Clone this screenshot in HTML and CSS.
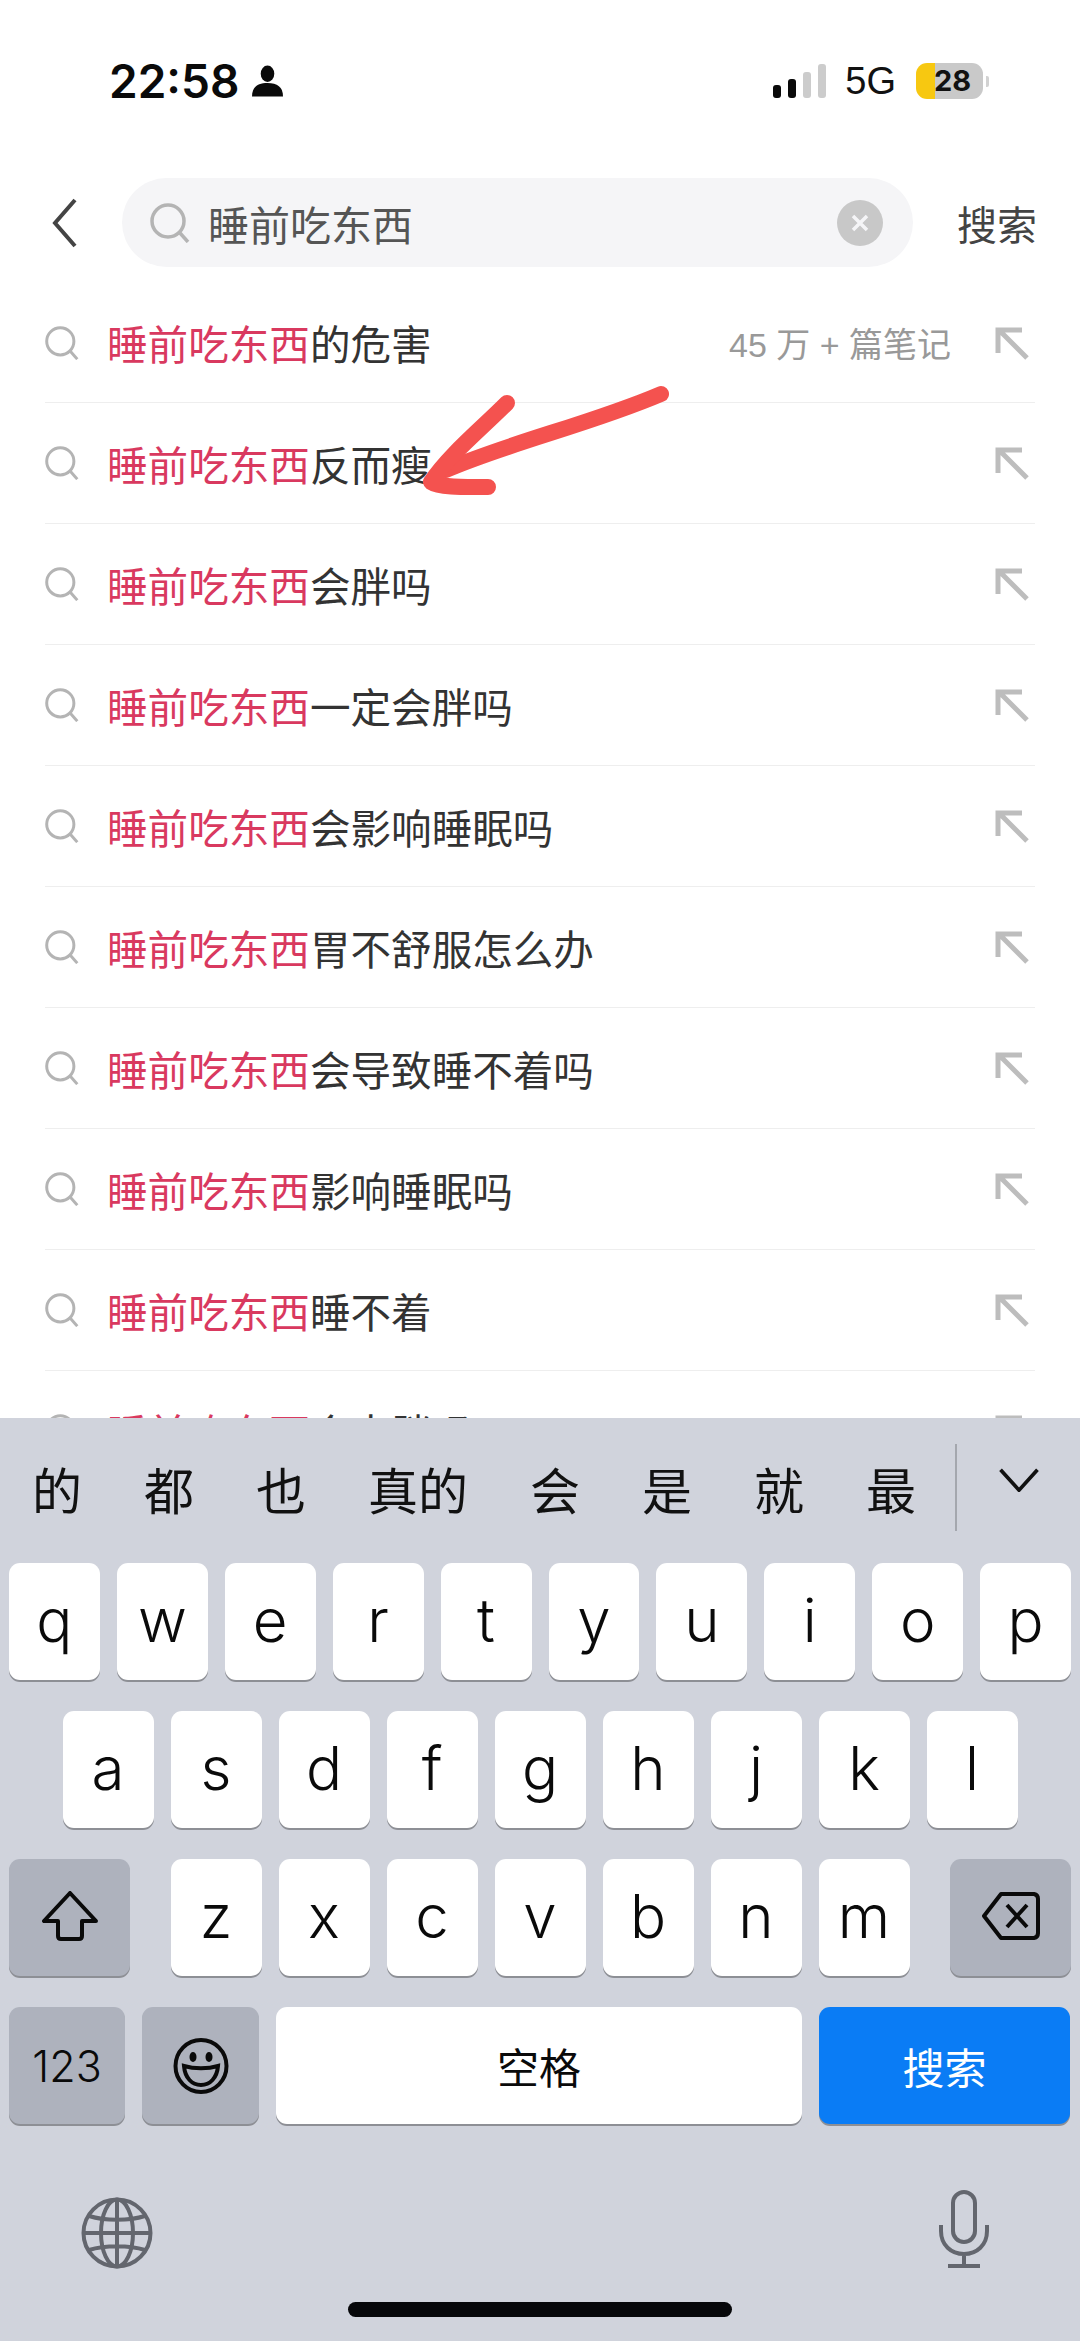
FILE: index.html
```html
<!DOCTYPE html>
<html lang="zh-CN">
<head>
    <meta charset="UTF-8">
    <meta name="viewport" content="width=device-width, initial-scale=1.0">
    <title>搜索</title>
    <link rel="stylesheet" href="styles.css">
</head>
<body>
    <div class="screen">
        <div class="status-bar">
            <div class="status-left">
                <span class="time">22:58</span>
                <svg class="person" viewBox="0 0 32 32"><ellipse cx="16" cy="8.5" rx="7" ry="8.5"/><path d="M0 32c0-10 6-14 16-14s16 4 16 14z"/></svg>
            </div>
            <div class="status-right">
                <div class="signal">
                    <span class="bar bar1"></span>
                    <span class="bar bar2"></span>
                    <span class="bar bar3"></span>
                    <span class="bar bar4"></span>
                </div>
                <span class="network">5G</span>
                <div class="battery"><span class="battery-level">28</span></div>
                <span class="battery-nub"></span>
            </div>
        </div>

        <div class="search-row">
            <svg class="back" viewBox="0 0 25 50"><path d="M23 2 3 25l20 23"/></svg>
            <div class="search-box">
                <svg class="search-icon big" viewBox="0 0 40 40"><circle cx="18" cy="18" r="16"/><path d="m30 30 8 9"/></svg>
                <span class="search-text">睡前吃东西</span>
                <svg class="clear" viewBox="0 0 46 46"><circle cx="23" cy="23" r="23"/><path d="m16 16 14 14m0-14L16 30"/></svg>
            </div>
            <span class="search-link">搜索</span>
        </div>

        <ul class="list">
            <li class="row">
                <svg class="search-icon" viewBox="0 0 40 40"><circle cx="18" cy="18" r="16"/><path d="m30 30 8 9"/></svg>
                <span class="row-text"><em>睡前吃东西</em>的危害</span>
                <span class="row-count">45 万 + 篇笔记</span>
                <svg class="fill-icon" viewBox="0 0 34 34"><path d="M3 27V4h24M4 4l28 28"/></svg>
            </li>
            <li class="row">
                <svg class="search-icon" viewBox="0 0 40 40"><circle cx="18" cy="18" r="16"/><path d="m30 30 8 9"/></svg>
                <span class="row-text"><em>睡前吃东西</em>反而瘦</span>
                <svg class="fill-icon" viewBox="0 0 34 34"><path d="M3 27V4h24M4 4l28 28"/></svg>
            </li>
            <li class="row">
                <svg class="search-icon" viewBox="0 0 40 40"><circle cx="18" cy="18" r="16"/><path d="m30 30 8 9"/></svg>
                <span class="row-text"><em>睡前吃东西</em>会胖吗</span>
                <svg class="fill-icon" viewBox="0 0 34 34"><path d="M3 27V4h24M4 4l28 28"/></svg>
            </li>
            <li class="row">
                <svg class="search-icon" viewBox="0 0 40 40"><circle cx="18" cy="18" r="16"/><path d="m30 30 8 9"/></svg>
                <span class="row-text"><em>睡前吃东西</em>一定会胖吗</span>
                <svg class="fill-icon" viewBox="0 0 34 34"><path d="M3 27V4h24M4 4l28 28"/></svg>
            </li>
            <li class="row">
                <svg class="search-icon" viewBox="0 0 40 40"><circle cx="18" cy="18" r="16"/><path d="m30 30 8 9"/></svg>
                <span class="row-text"><em>睡前吃东西</em>会影响睡眠吗</span>
                <svg class="fill-icon" viewBox="0 0 34 34"><path d="M3 27V4h24M4 4l28 28"/></svg>
            </li>
            <li class="row">
                <svg class="search-icon" viewBox="0 0 40 40"><circle cx="18" cy="18" r="16"/><path d="m30 30 8 9"/></svg>
                <span class="row-text"><em>睡前吃东西</em>胃不舒服怎么办</span>
                <svg class="fill-icon" viewBox="0 0 34 34"><path d="M3 27V4h24M4 4l28 28"/></svg>
            </li>
            <li class="row">
                <svg class="search-icon" viewBox="0 0 40 40"><circle cx="18" cy="18" r="16"/><path d="m30 30 8 9"/></svg>
                <span class="row-text"><em>睡前吃东西</em>会导致睡不着吗</span>
                <svg class="fill-icon" viewBox="0 0 34 34"><path d="M3 27V4h24M4 4l28 28"/></svg>
            </li>
            <li class="row">
                <svg class="search-icon" viewBox="0 0 40 40"><circle cx="18" cy="18" r="16"/><path d="m30 30 8 9"/></svg>
                <span class="row-text"><em>睡前吃东西</em>影响睡眠吗</span>
                <svg class="fill-icon" viewBox="0 0 34 34"><path d="M3 27V4h24M4 4l28 28"/></svg>
            </li>
            <li class="row">
                <svg class="search-icon" viewBox="0 0 40 40"><circle cx="18" cy="18" r="16"/><path d="m30 30 8 9"/></svg>
                <span class="row-text"><em>睡前吃东西</em>睡不着</span>
                <svg class="fill-icon" viewBox="0 0 34 34"><path d="M3 27V4h24M4 4l28 28"/></svg>
            </li>
            <li class="row">
                <svg class="search-icon" viewBox="0 0 40 40"><circle cx="18" cy="18" r="16"/><path d="m30 30 8 9"/></svg>
                <span class="row-text"><em>睡前吃东西</em>会太胖吗</span>
                <svg class="fill-icon" viewBox="0 0 34 34"><path d="M3 27V4h24M4 4l28 28"/></svg>
            </li>
        </ul>

        <div class="keyboard">
            <div class="candidates">
                <div class="candidate-words">
                    <span>的</span><span>都</span><span>也</span><span>真的</span><span>会</span><span>是</span><span>就</span><span>最</span>
                </div>
                <div class="candidate-more">
                    <svg class="chevron" viewBox="0 0 44 26"><path d="m2 2 20 22L42 2"/></svg>
                </div>
            </div>

            <div class="keys">
                <div class="key-row">
                    <span class="key">q</span><span class="key">w</span><span class="key">e</span><span class="key">r</span><span class="key">t</span><span class="key">y</span><span class="key">u</span><span class="key">i</span><span class="key">o</span><span class="key">p</span>
                </div>
                <div class="key-row">
                    <span class="key">a</span><span class="key">s</span><span class="key">d</span><span class="key">f</span><span class="key">g</span><span class="key">h</span><span class="key">j</span><span class="key">k</span><span class="key">l</span>
                </div>
                <div class="key-row between">
                    <span class="key side">
                        <svg class="shift" viewBox="0 0 58 50"><path d="M29 2 3 30h14v15q0 3 3 3h18q3 0 3-3V30h14z"/></svg>
                    </span>
                    <div class="key-group">
                        <span class="key">z</span><span class="key">x</span><span class="key">c</span><span class="key">v</span><span class="key">b</span><span class="key">n</span><span class="key">m</span>
                    </div>
                    <span class="key side">
                        <svg class="delete" viewBox="0 0 60 50"><path d="M20 3h33a5 5 0 0 1 4 5v34a5 5 0 0 1-4 5H20L3 25z"/><path d="m26 14 20 22m0-22L26 36"/></svg>
                    </span>
                </div>
                <div class="key-row bottom">
                    <span class="key mod num">123</span>
                    <span class="key mod emoji">
                        <svg class="smile" viewBox="0 0 56 56"><ellipse cx="28" cy="28" rx="25.5" ry="26"/><ellipse class="dot" cx="20" cy="19" rx="3.5" ry="5"/><ellipse class="dot" cx="36" cy="19" rx="3.5" ry="5"/><path class="mouth" d="M11 28c10 3 24 3 34 0-1 12-8 19-17 19s-16-7-17-19z"/></svg>
                    </span>
                    <span class="key space">空格</span>
                    <span class="key go">搜索</span>
                </div>
            </div>

            <div class="keyboard-tools">
                <svg class="globe" viewBox="0 0 72 72"><circle cx="36" cy="36" r="33.5"/><ellipse cx="36" cy="36" rx="16" ry="33.5"/><path d="M36 2v68M3 36h66M8 19c16 5 40 5 56 0M8 53c16-5 40-5 56 0"/></svg>
                <svg class="mic" viewBox="0 0 52 78"><rect x="15" y="2" width="22" height="50" rx="11"/><path d="M3 35v6c0 14 10 23 23 23s23-9 23-23v-6M26 64v11M10 76h32"/></svg>
            </div>
            <div class="home-bar"></div>
        </div>

        <svg class="scribble" viewBox="0 0 1080 2341">
            <path d="M661 394c-70 30-150 48-215 76"/>
            <path d="M507 403c-27 27-58 52-76 79 9 6 36 5 57 5"/>
        </svg>
    </div>
</body>
</html>
```

FILE: styles.css
```css
* {
    box-sizing: border-box;
}

body {
    margin: 0;
    background-color: #ffffff;
    font-family: "Liberation Sans", "Noto Sans CJK SC", sans-serif;
    color: #333333;
}

svg {
    display: block;
    flex-shrink: 0;
}

.screen {
    position: relative;
    width: 1080px;
    height: 2341px;
    overflow: hidden;
    display: flex;
    flex-direction: column;
}

/* status bar */
.status-bar {
    height: 178px;
    padding: 56px 91px 0 109px;
    display: flex;
    justify-content: space-between;
    align-items: flex-start;
}

.status-left {
    display: flex;
    align-items: center;
    gap: 13px;
}

.time {
    font-family: Inter, "Liberation Sans", sans-serif;
    font-size: 46px;
    line-height: 50px;
    font-weight: 600;
    color: #0a0a0a;
}

.person {
    width: 31px;
    height: 32px;
    fill: #0a0a0a;
}

.status-right {
    display: flex;
    align-items: center;
    height: 50px;
}

.signal {
    display: flex;
    align-items: flex-end;
    gap: 7px;
    margin-right: 19px;
}

.bar {
    width: 8px;
    border-radius: 3px;
    background-color: #cccccc;
}

.bar1 {
    height: 13px;
    background-color: #0a0a0a;
}

.bar2 {
    height: 19px;
    background-color: #0a0a0a;
}

.bar3 {
    height: 26px;
}

.bar4 {
    height: 34px;
}

.network {
    font-size: 38px;
    line-height: 50px;
    color: #111111;
    margin-right: 20px;
}

.battery {
    width: 67px;
    height: 36px;
    border-radius: 11px;
    background: linear-gradient(90deg, #f7c811 19px, #c9c9c9 19px);
    text-align: center;
    padding-left: 6px;
}

.battery-level {
    font-family: Inter, "Liberation Sans", sans-serif;
    font-size: 29px;
    line-height: 36px;
    font-weight: 700;
    color: #111111;
    display: block;
}

.battery-nub {
    width: 3px;
    height: 11px;
    margin-left: 3px;
    background-color: #d2d2d2;
    border-radius: 0 2px 2px 0;
}

/* search bar */
.search-row {
    height: 105px;
    padding: 0 43px 16px 52px;
    display: flex;
    align-items: center;
}

.back {
    width: 25px;
    height: 50px;
    fill: none;
    stroke: #444444;
    stroke-width: 4;
    margin-right: 45px;
}

.search-box {
    width: 791px;
    height: 89px;
    flex-shrink: 0;
    border-radius: 45px;
    background-color: #f5f5f7;
    padding: 0 30px 0 28px;
    display: flex;
    align-items: center;
}

.search-icon {
    width: 34px;
    height: 34px;
    fill: none;
    stroke: #b4b4b4;
    stroke-width: 3.5;
}

.search-icon.big {
    width: 40px;
    height: 40px;
    stroke-width: 3.5;
}

.search-text {
    font-size: 41px;
    color: #555555;
    margin-left: 18px;
    flex: 1;
}

.clear {
    width: 46px;
    height: 46px;
    fill: #c8c8c8;
    stroke: #f5f5f7;
    stroke-width: 3.5;
}

.clear circle {
    stroke: none;
}

.search-link {
    font-size: 40px;
    color: #444444;
    margin-left: 44px;
    white-space: nowrap;
}

/* suggestions */
.list {
    list-style: none;
    margin: 0;
    padding: 0 45px;
    height: 1135px;
    overflow: hidden;
}

.row {
    height: 121px;
    border-bottom: 1px solid #eeeeee;
    display: flex;
    align-items: center;
}

.row:first-child {
    height: 120px;
}

.row-text {
    font-size: 40.6px;
    color: #333333;
    margin-left: 28px;
    flex: 1;
}

.row-text em {
    font-style: normal;
    color: #d9395f;
}

.row-count {
    font-size: 34px;
    color: #999999;
    margin-right: 44px;
}

.fill-icon {
    width: 34px;
    height: 34px;
    margin-right: 6px;
    fill: none;
    stroke: #bdbdbd;
    stroke-width: 5;
}

/* keyboard */
.keyboard {
    flex: 1;
    background-color: #d0d3dc;
    display: flex;
    flex-direction: column;
    position: relative;
}

.candidates {
    height: 145px;
    display: flex;
    align-items: center;
}

.candidate-words {
    width: 955px;
    padding: 4px 0 0 32px;
    display: flex;
    gap: 62px;
    font-size: 50px;
    line-height: 58px;
    color: #111111;
}

.candidate-more {
    flex: 1;
    height: 87px;
    margin-bottom: 6px;
    border-left: 2px solid #a4a7ae;
    padding: 24px 0 0 41px;
}

.chevron {
    width: 42px;
    height: 24px;
    fill: none;
    stroke: #111111;
    stroke-width: 4;
}

.keys {
    padding: 0 9px;
    display: flex;
    flex-direction: column;
    gap: 31px;
}

.key-row {
    display: flex;
    justify-content: center;
    gap: 17px;
}

.key-row.between {
    justify-content: space-between;
    gap: 0;
}

.key-group {
    display: flex;
    gap: 17px;
}

.key {
    width: 91px;
    height: 117px;
    padding-bottom: 4px;
    border-radius: 11px;
    background-color: #ffffff;
    box-shadow: 0 2px 0 #8d8f95;
    display: flex;
    align-items: center;
    justify-content: center;
    font-family: Inter, "Liberation Sans", "Noto Sans CJK SC", sans-serif;
    font-size: 60px;
    font-weight: 300;
    color: #0a0a0a;
}

.key.side {
    width: 121px;
    background-color: #aeb2bd;
}

.shift {
    width: 58px;
    height: 50px;
    fill: none;
    stroke: #0a0a0a;
    stroke-width: 4;
    stroke-linejoin: round;
}

.delete {
    width: 60px;
    height: 50px;
    fill: none;
    stroke: #0a0a0a;
    stroke-width: 4;
    stroke-linejoin: round;
}

.key.mod {
    background-color: #aeb2bd;
    padding-bottom: 0;
}

.key.num {
    width: 116px;
    font-size: 43px;
}

.key.emoji {
    width: 117px;
}

.smile {
    width: 56px;
    height: 58px;
    fill: none;
    stroke: #0a0a0a;
    stroke-width: 4;
}

.smile .dot {
    fill: #0a0a0a;
    stroke: none;
}

.smile .mouth {
    stroke-width: 4;
}

.key.space {
    width: 526px;
    padding-bottom: 0;
    font-family: "Liberation Sans", "Noto Sans CJK SC", sans-serif;
    font-size: 42px;
    font-weight: 400;
}

.key.go {
    width: 251px;
    padding-bottom: 0;
    background-color: #0a7cf5;
    font-family: "Liberation Sans", "Noto Sans CJK SC", sans-serif;
    font-size: 42px;
    font-weight: 400;
    color: #ffffff;
}

.key-row.bottom {
    gap: 17px;
    justify-content: flex-start;
}

.keyboard-tools {
    padding: 66px 90px 0 81px;
    display: flex;
    justify-content: space-between;
    align-items: flex-start;
}

.globe {
    width: 72px;
    height: 72px;
    margin-top: 7px;
    fill: none;
    stroke: #63666e;
    stroke-width: 4;
}

.mic {
    width: 52px;
    height: 78px;
    fill: none;
    stroke: #63666e;
    stroke-width: 4;
}

.home-bar {
    width: 384px;
    height: 15px;
    margin: 33px auto 0;
    border-radius: 8px;
    background-color: #06070a;
}

/* red arrow drawn over the screenshot */
.scribble {
    position: absolute;
    top: 0;
    left: 0;
    width: 1080px;
    height: 2341px;
    fill: none;
    stroke: #f4524f;
    stroke-width: 16;
    stroke-linecap: round;
    stroke-linejoin: round;
    pointer-events: none;
}
```
